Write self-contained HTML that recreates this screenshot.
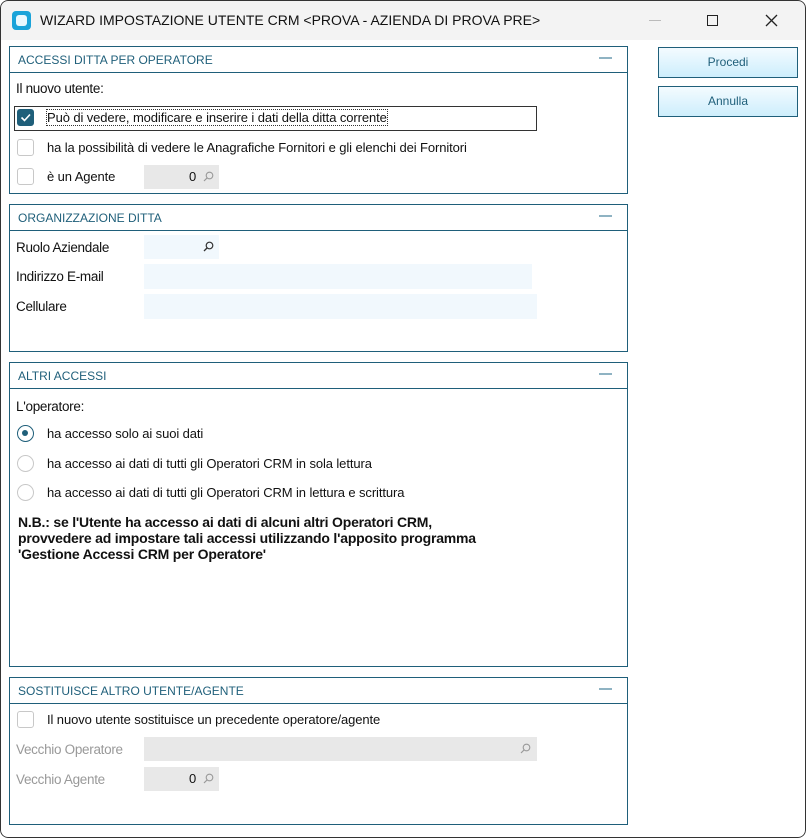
<!DOCTYPE html>
<html><head><meta charset="utf-8"><style>
*{box-sizing:border-box;margin:0;padding:0}
body{width:806px;height:838px;background:#fff;font-family:"Liberation Sans",sans-serif;position:relative;overflow:hidden;color:#111}
.win{position:absolute;left:0;top:0;width:806px;height:838px;border-radius:8px;background:#fff;overflow:hidden}
.frame{position:absolute;left:0;top:0;width:806px;height:838px;border:1px solid #333;border-radius:8px;pointer-events:none}
.tb{position:absolute;left:0;top:0;width:806px;height:40px;background:#f3f3f3}
.a{position:absolute;white-space:nowrap}
.panel{position:absolute;left:9px;width:619px;border:1px solid #1f5f7a}
.ph{position:absolute;left:0;top:0;right:0;height:26px;border-bottom:1px solid #1f5f7a;color:#1f5f7a;font-size:12px;padding:6px 0 0 8px}
.ph i{position:absolute;right:15px;top:10px;width:13px;height:2px;background:#8fb3c3}
.lbl{font-size:13.5px;letter-spacing:-0.3px}
.t{font-size:13px;letter-spacing:-0.1px}
.cb{position:absolute;width:17px;height:17px;border:1px solid #c8c8c8;border-radius:3px;background:#fff}
.rb{position:absolute;width:17px;height:17px;border:1px solid #c8c8c8;border-radius:50%}
.fld{position:absolute;height:24px}
.btn{position:absolute;left:658px;width:140px;height:31px;border:1px solid #1f5f7a;background:linear-gradient(#f4fbff,#cdeefc);color:#1f5f7a;font-size:12px;text-align:center;line-height:29px}
.mag{position:absolute}
</style></head><body><div class="win">
<div class="tb">
 <div class="a" style="left:12px;top:11px;width:19px;height:19px;background:#1aa3d9;border-radius:4px"><div style="position:absolute;left:4px;top:4px;width:11px;height:11px;background:#e9f8fe;border-radius:3px"></div></div>
 <div class="a" style="left:40px;top:12px;font-size:14px;color:#111">WIZARD IMPOSTAZIONE UTENTE CRM &lt;PROVA - AZIENDA DI PROVA PRE&gt;</div>
 <div class="a" style="left:649px;top:20px;width:12px;height:1px;background:#bbb"></div>
 <div class="a" style="left:707px;top:15px;width:11px;height:11px;border:1.3px solid #222"></div>
 <svg class="a" style="left:765px;top:14px" width="13" height="13"><path d="M1 1L12 12M12 1L1 12" stroke="#222" stroke-width="1.3"/></svg>
</div>

<div class="btn" style="top:47px">Procedi</div>
<div class="btn" style="top:86px">Annulla</div>

<div class="panel" style="top:46px;height:148px">
 <div class="ph">ACCESSI DITTA PER OPERATORE<i></i></div>
 <div class="a lbl" style="left:6px;top:34px">Il nuovo utente:</div>
 <div class="a" style="left:4px;top:59px;width:523px;height:25px;border:1px solid #333"></div>
 <div class="cb" style="left:7px;top:62px;background:#1f5f7a;border-color:#1f5f7a"><svg width="15" height="15" style="position:absolute;left:0;top:0"><path d="M3.5 7.5L6.5 10.5L12 4.5" fill="none" stroke="#fff" stroke-width="1.6"/></svg></div>
 <div class="a t" style="left:37px;top:63px;outline:1px dotted #333">Può di vedere, modificare e inserire i dati della ditta corrente</div>
 <div class="cb" style="left:7px;top:92px"></div>
 <div class="a t" style="left:37px;top:93px">ha la possibilità di vedere le Anagrafiche Fornitori e gli elenchi dei Fornitori</div>
 <div class="cb" style="left:7px;top:121px"></div>
 <div class="a t" style="left:37px;top:122px">è un Agente</div>
 <div class="fld" style="left:134px;top:118px;width:75px;background:#e8e8e8"></div>
 <div class="a t" style="left:179px;top:122px">0</div><svg class="mag" style="left:193px;top:124px" width="11" height="11"><circle cx="6.5" cy="4.5" r="3.3" fill="none" stroke="#999" stroke-width="1.1"/><path d="M4 7L1 10" stroke="#999" stroke-width="1.2"/></svg>
</div>

<div class="panel" style="top:204px;height:148px">
 <div class="ph">ORGANIZZAZIONE DITTA<i></i></div>
 <div class="a lbl" style="left:6px;top:35px">Ruolo Aziendale</div>
 <div class="fld" style="left:134px;top:30px;width:75px;background:#f1f8fd"></div><svg class="mag" style="left:193px;top:36px" width="11" height="11"><circle cx="6.5" cy="4.5" r="3.3" fill="none" stroke="#333" stroke-width="1.2"/><path d="M4 7L1 10" stroke="#333" stroke-width="1.3"/></svg>
 <div class="a lbl" style="left:6px;top:64px">Indirizzo E-mail</div>
 <div class="fld" style="left:134px;top:59px;width:388px;height:25px;background:#f1f8fd"></div>
 <div class="a lbl" style="left:6px;top:94px">Cellulare</div>
 <div class="fld" style="left:134px;top:89px;width:393px;height:25px;background:#f1f8fd"></div>
</div>

<div class="panel" style="top:362px;height:305px">
 <div class="ph">ALTRI ACCESSI<i></i></div>
 <div class="a lbl" style="left:6px;top:36px">L'operatore:</div>
 <div class="rb" style="left:7px;top:62px;border:1.5px solid #1f5f7a"><div style="position:absolute;left:4px;top:4px;width:6px;height:6px;border-radius:50%;background:#1f5f7a"></div></div>
 <div class="a t" style="left:37px;top:63px">ha accesso solo ai suoi dati</div>
 <div class="rb" style="left:7px;top:92px"></div>
 <div class="a t" style="left:37px;top:93px">ha accesso ai dati di tutti gli Operatori CRM in sola lettura</div>
 <div class="rb" style="left:7px;top:121px"></div>
 <div class="a t" style="left:37px;top:122px">ha accesso ai dati di tutti gli Operatori CRM in lettura e scrittura</div>
 <div class="a" style="left:8px;top:151px;font-size:14px;font-weight:bold;line-height:16px;letter-spacing:-0.2px">N.B.: se l'Utente ha accesso ai dati di alcuni altri Operatori CRM,<br>provvedere ad impostare tali accessi utilizzando l'apposito programma<br>'Gestione Accessi CRM per Operatore'</div>
</div>

<div class="panel" style="top:677px;height:148px">
 <div class="ph">SOSTITUISCE ALTRO UTENTE/AGENTE<i></i></div>
 <div class="cb" style="left:7px;top:33px"></div>
 <div class="a t" style="left:37px;top:34px">Il nuovo utente sostituisce un precedente operatore/agente</div>
 <div class="a lbl" style="left:6px;top:64px;color:#999">Vecchio Operatore</div>
 <div class="fld" style="left:134px;top:59px;width:393px;background:#e8e8e8"></div><svg class="mag" style="left:510px;top:65px" width="11" height="11"><circle cx="6.5" cy="4.5" r="3.3" fill="none" stroke="#999" stroke-width="1.1"/><path d="M4 7L1 10" stroke="#999" stroke-width="1.2"/></svg>
 <div class="a lbl" style="left:6px;top:94px;color:#999">Vecchio Agente</div>
 <div class="fld" style="left:134px;top:89px;width:75px;background:#e8e8e8"></div>
 <div class="a t" style="left:179px;top:93px">0</div><svg class="mag" style="left:193px;top:95px" width="11" height="11"><circle cx="6.5" cy="4.5" r="3.3" fill="none" stroke="#999" stroke-width="1.1"/><path d="M4 7L1 10" stroke="#999" stroke-width="1.2"/></svg>
</div>
<div class="frame"></div>
</div></body></html>
